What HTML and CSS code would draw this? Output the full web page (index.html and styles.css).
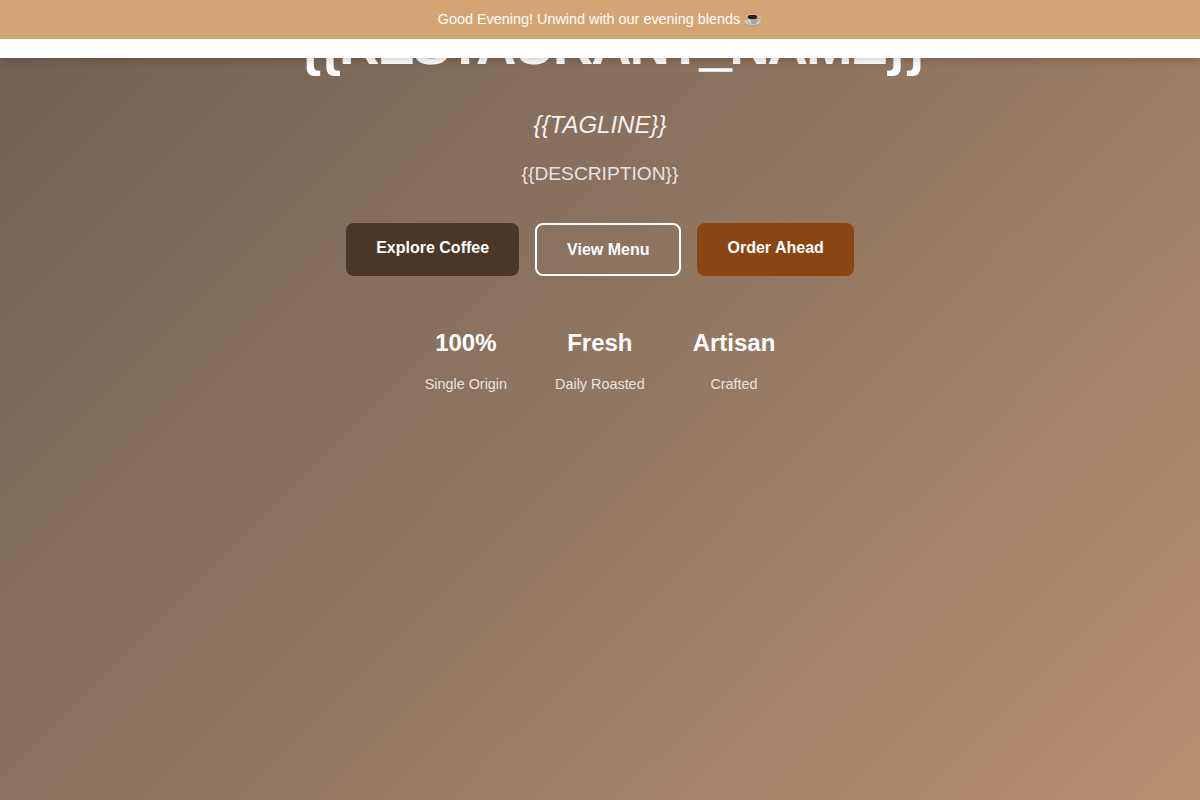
FILE: index.html
```html
<!DOCTYPE html>
<html lang="en">
<head>
<meta charset="utf-8">
<title>Coffee House</title>
<link rel="stylesheet" href="styles.css">
</head>
<body>
<div class="banner"><span>Good Evening! Unwind with our evening blends</span>
<svg class="cup" viewBox="0 0 18 17" aria-hidden="true">
<ellipse cx="8.500" cy="12.200" rx="8.300" ry="3.800" fill="#aaa296"/>
<ellipse cx="8.500" cy="11.600" rx="8.200" ry="3.500" fill="#d0ccc3"/>
<path d="M13.500 6.700c4-1.200 4.400 3.500-1 4.500" fill="none" stroke="#c5c0b7" stroke-width="1.200"/>
<path d="M2.800 6.500c0 5 2 8 5.800 8s5.600-3 5.600-8z" fill="#aaa399"/>
<path d="M3.600 9c.7 3.300 2.300 4.600 4.600 4.900-1.300-1.300-1.700-2.800-1.800-4z" fill="#e6e3dd"/>
<ellipse cx="8.500" cy="6.800" rx="5.700" ry="2.700" fill="#d9d5ce"/>
<ellipse cx="8.500" cy="7" rx="4.900" ry="2.200" fill="#2c1d14"/>
<path d="M8 4c-2-1.500 1.500-1.700 0-3.500" fill="none" stroke="#a99b8b" stroke-width=".8"/>
</svg></div>
<header class="navbar"></header>
<main class="hero">
<div class="content">
<h1 class="title">{{RESTAURANT<span class="rule">_</span>NAME}}</h1>
<p class="tagline">{{TAGLINE}}</p>
<p class="description">{{DESCRIPTION}}</p>
<div class="actions">
<a class="btn primary">Explore Coffee</a>
<a class="btn outline">View Menu</a>
<a class="btn accent">Order Ahead</a>
</div>
<div class="stats">
<div class="stat"><strong class="value">100%</strong><span class="label">Single Origin</span></div>
<div class="stat"><strong class="value">Fresh</strong><span class="label">Daily Roasted</span></div>
<div class="stat"><strong class="value">Artisan</strong><span class="label">Crafted</span></div>
</div>
</div>
</main>
</body>
</html>
```
FILE: styles.css
```css
* { box-sizing: border-box; margin: 0; padding: 0; }
body {
  height: 800px;
  overflow: hidden;
  display: flex;
  flex-direction: column;
  font-family: "Liberation Sans", Arial, sans-serif;
  color: #fff;
  background: linear-gradient(135deg, #706154 0%, #927660 50%, #b98f71 100%);
}
.banner {
  height: 39px;
  flex: none;
  display: flex;
  justify-content: center;
  align-items: center;
  gap: 4px;
  padding-bottom: 2px;
  font-size: 14.4px;
  background: #d4a574;
  z-index: 2;
}
.cup { width: 18px; height: 17px; }
.navbar {
  height: 19px;
  flex: none;
  background: #fff;
  box-shadow: 0 2px 10px rgba(0, 0, 0, .2);
  z-index: 1;
}
.hero { display: flex; justify-content: center; margin-top: -47px; }
.content { width: 600px; text-align: center; }
.title { font-size: 56px; line-height: 67px; letter-spacing: -2.05px; margin-left: -.5px; }
.rule { -webkit-text-stroke: 1.4px #fff; }
.tagline { margin-top: 31px; font-size: 24px; line-height: 32px; font-style: italic; opacity: .9; }
.description { margin-top: 18px; font-size: 19.2px; line-height: 30px; opacity: .8; }
.actions { display: flex; justify-content: center; gap: 16px; margin-top: 34px; }
.btn { padding: 15px 30px; font-size: 16px; font-weight: 700; line-height: 19px; border-radius: 8px; }
.primary { background: #4a3728; }
.outline { border: 2px solid #fff; }
.accent { background: #8b4513; }
.stats { display: flex; justify-content: center; gap: 48px; margin-top: 48px; }
.stat { display: flex; flex-direction: column; }
.value { font-size: 24px; line-height: 38px; }
.label { margin-top: 11px; font-size: 14.4px; line-height: 23px; opacity: .8; }
```
